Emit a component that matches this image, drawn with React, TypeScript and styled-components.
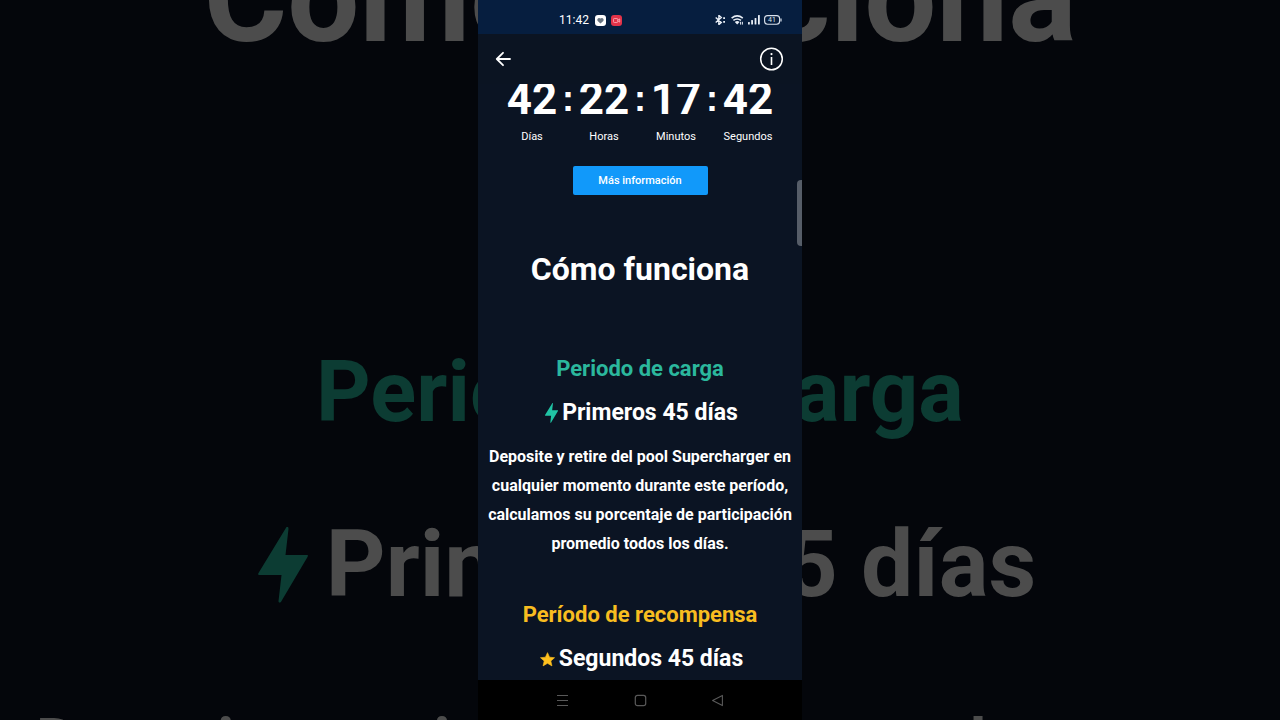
import React from "react";
import styled, { createGlobalStyle } from "styled-components";

const GlobalStyle = createGlobalStyle`
  *, *::before, *::after { box-sizing: border-box; }
  body {
    margin: 0;
    background: #04060b;
    font-family: Roboto, "Liberation Sans", sans-serif;
    color: #fff;
  }
  h1, h2, h3, p { margin: 0; }
  button { border: 0; padding: 0; background: none; color: inherit; font-family: inherit; cursor: pointer; }
  svg { display: block; }
`;

const Stage = styled.div`
  position: relative;
  display: flex;
  justify-content: center;
  height: 100vh;
  overflow: hidden;
`;

const Backdrop = styled.div`
  position: absolute;
  inset: 0;
  display: flex;
  flex-direction: column;
  align-items: center;
  overflow: hidden;
  white-space: nowrap;
  font-weight: 700;
  color: #4c4c4c;
`;

const BackdropTitle = styled.div`
  margin-top: -83px;
  font-size: 128px;
  line-height: 160px;
`;

const BackdropPeriod = styled.div`
  margin-top: 260px;
  font-size: 85px;
  line-height: 110px;
  color: #0c3c33;
`;

const BackdropDays = styled.div`
  display: flex;
  align-items: center;
  gap: 18px;
  margin-top: 63px;
  padding-left: 14px;
  font-size: 93px;
  line-height: 110px;
`;

const BackdropText = styled.div`
  margin-top: 66px;
  font-size: 64px;
  line-height: 114px;
`;

const Phone = styled.div`
  position: relative;
  display: flex;
  flex-direction: column;
  height: 100%;
  aspect-ratio: 9 / 20;
  background: #0b1423;
`;

const StatusBar = styled.header`
  display: flex;
  align-items: center;
  gap: 6px;
  flex: none;
  height: 34px;
  padding: 6px 20px 0 81px;
  background: #061e3f;
  font-size: 12px;
  line-height: 16px;
`;

const AppBadges = styled.div`
  display: flex;
  gap: 5px;
`;

const StatusIcons = styled.div`
  display: flex;
  align-items: center;
  gap: 4px;
  margin-left: auto;
`;

const AppBar = styled.nav`
  display: flex;
  align-items: center;
  justify-content: space-between;
  flex: none;
  height: 50px;
  padding: 0 18px 0 16px;
  background: #0b1422;
`;

const Content = styled.main`
  display: flex;
  flex-direction: column;
  align-items: center;
  flex: 1;
  min-height: 0;
  overflow: hidden;
  text-align: center;
`;

const Countdown = styled.div`
  display: flex;
  justify-content: center;
  margin-top: -7px;
`;

const Unit = styled.div`
  width: 60px;
`;

const Digits = styled.div`
  font-size: 44px;
  font-weight: 700;
  line-height: 44px;
`;

const UnitLabel = styled.div`
  margin-top: 8px;
  font-size: 11px;
  line-height: 16px;
`;

const Colon = styled.div`
  width: 12px;
  font: 700 36px/44px "Liberation Sans", sans-serif;
`;

const InfoButton = styled.button`
  flex: none;
  width: 135px;
  height: 29px;
  margin-top: 21px;
  border-radius: 2px;
  background: #1199fa;
  font-size: 11px;
  font-weight: 500;
  line-height: 16px;
`;

const Title = styled.h1`
  margin-top: 54px;
  font-size: 32px;
  font-weight: 700;
  line-height: 40px;
`;

const Period = styled.section<{ $gap: number }>`
  margin-top: ${(p) => p.$gap}px;
  flex: none;
`;

const PeriodTitle = styled.h2<{ $color: string }>`
  font-size: 22px;
  font-weight: 700;
  line-height: 28px;
  color: ${(p) => p.$color};
`;

const Days = styled.h3`
  display: flex;
  align-items: center;
  justify-content: center;
  gap: 4px;
  margin-top: 16px;
  padding-left: 3px;
  font-size: 23px;
  font-weight: 700;
  line-height: 28px;
`;

const Description = styled.p`
  margin-top: 15px;
  padding: 0 6px;
  font-size: 16px;
  font-weight: 700;
  line-height: 29px;
`;

const EdgeHandle = styled.div`
  position: absolute;
  top: 180px;
  right: 0;
  width: 5px;
  height: 66px;
  border-radius: 4px 0 0 4px;
  background: #565d68;
`;

const SystemNav = styled.footer`
  display: flex;
  align-items: center;
  justify-content: space-between;
  flex: none;
  height: 40px;
  padding: 0 78px;
  background: #000;
`;

const Bolt = ({ width, height, color }: { width: number; height: number; color: string }) => (
  <svg width={width} height={height} viewBox="0 0 49 76" fill={color} aria-hidden="true">
    <path d="M28 0 0 46c-1 2 0 2 1 2h22l-3 26c0 2 2 2 3 0l26-44c1-2 0-2-1-2H27l3-26c0-2-1-3-2-2Z" />
  </svg>
);

const Star = () => (
  <svg width="15" height="15" viewBox="0 0 24 24" fill="#ffc01e" stroke="#ffc01e" strokeWidth="1" strokeLinejoin="round" aria-hidden="true">
    <path d="m12 1 3.3 7.3 8 .8-6 5.3 1.8 7.8-7.1-4.1-7.1 4.1 1.8-7.8-6-5.3 8-.8Z" />
  </svg>
);

const HeartApp = () => (
  <svg width="11" height="11" viewBox="0 0 11 11" aria-hidden="true">
    <rect width="11" height="11" rx="3" fill="#fff" />
    <path d="M5.5 8.6 2.7 5.9C1.3 4.2 3.8 1.9 5.5 3.6 7.2 1.9 9.7 4.2 8.3 5.9Z" fill="#687480" />
  </svg>
);

const RecordApp = () => (
  <svg width="11" height="11" viewBox="0 0 11 11" fill="none" aria-hidden="true">
    <rect width="11" height="11" rx="3" fill="#e23349" />
    <rect x="2.5" y="3.5" width="4.2" height="4" rx=".8" stroke="#ffb3bb" strokeWidth=".8" />
    <path d="m6.8 5.2 1.9-1.3v3.2L6.8 5.8" stroke="#ffb3bb" strokeWidth=".8" />
  </svg>
);

const Bluetooth = () => (
  <svg width="12" height="10" viewBox="0 0 12 10" fill="none" stroke="#e8eef6" aria-hidden="true">
    <path d="m.7 2.4 5.6 5L3.9 9.6V.4l2.4 2.2-5.6 5" strokeWidth="1.4" />
    <path d="M8.2 3.2H10M8.2 6.8H10" strokeWidth="1.8" />
  </svg>
);

const Wifi = () => (
  <svg width="13" height="10" viewBox="0 0 13 10" fill="none" stroke="#e8eef6" strokeWidth="1.5" aria-hidden="true">
    <path d="M.6 3.2q5.6-4.6 11.2 0M2.4 5.4q3.8-3 7.6 0" />
    <path d="M3.8 7q2.4-1.8 4.8 0L6.2 9.6Z" fill="#e8eef6" stroke="none" />
    <path d="M9.6 6.8v2.8M11.4 6.8v2.8" strokeWidth="1" />
  </svg>
);

const Signal = () => (
  <svg width="12" height="10" viewBox="0 0 12 10" fill="#e8eef6" aria-hidden="true">
    <rect x="0" y="7" width="1.8" height="2.5" rx=".5" />
    <rect x="3.2" y="5" width="1.8" height="4.5" rx=".5" />
    <rect x="6.6" y="3" width="1.8" height="6.5" rx=".5" />
    <rect x="10" y="0" width="1.8" height="9.5" rx=".5" />
  </svg>
);

const Battery = () => (
  <svg width="18" height="10" viewBox="0 0 18 10" fill="none" aria-hidden="true">
    <rect x=".6" y=".6" width="15" height="8.6" rx="3" stroke="#dbe3ee" strokeWidth="1.1" />
    <path d="M17 3.5v3" stroke="#dbe3ee" strokeWidth="1.2" />
    <text x="8" y="7.4" fontSize="7" fill="#dbe3ee" textAnchor="middle">41</text>
  </svg>
);

const units = [
  { value: "42", label: "Días" },
  { value: "22", label: "Horas" },
  { value: "17", label: "Minutos" },
  { value: "42", label: "Segundos" },
];

export default function App() {
  return (
    <>
      <GlobalStyle />
      <Stage>
        <Backdrop aria-hidden="true">
          <BackdropTitle>Cómo funciona</BackdropTitle>
          <BackdropPeriod>Periodo de carga</BackdropPeriod>
          <BackdropDays>
            <Bolt width={50} height={76} color="#0c3c33" />
            Primeros 45 días
          </BackdropDays>
          <BackdropText>Deposite y retire del pool Supercharger en</BackdropText>
        </Backdrop>
        <Phone>
          <StatusBar>
            <span>11:42</span>
            <AppBadges>
              <HeartApp />
              <RecordApp />
            </AppBadges>
            <StatusIcons>
              <Bluetooth />
              <Wifi />
              <Signal />
              <Battery />
            </StatusIcons>
          </StatusBar>
          <AppBar>
            <button aria-label="Volver">
              <svg width="18" height="18" viewBox="0 0 18 18" fill="none" stroke="#fff" strokeWidth="1.8" strokeLinecap="round" strokeLinejoin="round">
                <path d="M16 9H3M9 2.8 2.8 9 9 15.2" />
              </svg>
            </button>
            <button aria-label="Información">
              <svg width="25" height="25" viewBox="0 0 25 25" fill="none" stroke="#fff">
                <circle cx="12.5" cy="12" r="10.8" strokeWidth="1.5" />
                <path d="M12.5 10v8" strokeWidth="1.6" />
                <circle cx="12.5" cy="7.1" r="1.1" fill="#fff" stroke="none" />
              </svg>
            </button>
          </AppBar>
          <Content>
            <Countdown>
              {units.map((unit, i) => (
                <React.Fragment key={unit.label}>
                  {i > 0 && <Colon>:</Colon>}
                  <Unit>
                    <Digits>{unit.value}</Digits>
                    <UnitLabel>{unit.label}</UnitLabel>
                  </Unit>
                </React.Fragment>
              ))}
            </Countdown>
            <InfoButton>Más información</InfoButton>
            <Title>Cómo funciona</Title>
            <Period $gap={66}>
              <PeriodTitle $color="#2bb89d">Periodo de carga</PeriodTitle>
              <Days>
                <Bolt width={13} height={20} color="#20c3a4" />
                Primeros 45 días
              </Days>
              <Description>
                Deposite y retire del pool Supercharger en cualquier momento durante este período, calculamos su
                porcentaje de participación promedio todos los días.
              </Description>
            </Period>
            <Period $gap={43}>
              <PeriodTitle $color="#f8bd20">Período de recompensa</PeriodTitle>
              <Days>
                <Star />
                Segundos 45 días
              </Days>
            </Period>
          </Content>
          <EdgeHandle />
          <SystemNav>
            <button aria-label="Recientes">
              <svg width="13" height="13" viewBox="0 0 13 13" stroke="#595959" strokeWidth="1.1">
                <path d="M1 1.5h11M1 6.5h11M1 11.5h11" />
              </svg>
            </button>
            <button aria-label="Inicio">
              <svg width="13" height="13" viewBox="0 0 13 13" fill="none" stroke="#595959" strokeWidth="1.2">
                <rect x="1.3" y="1.3" width="10.4" height="10.4" rx="2.2" />
              </svg>
            </button>
            <button aria-label="Atrás">
              <svg width="13" height="13" viewBox="0 0 13 13" fill="none" stroke="#595959" strokeWidth="1.1" strokeLinejoin="round">
                <path d="M11.4 1.4v10.2L1.6 6.5Z" />
              </svg>
            </button>
          </SystemNav>
        </Phone>
      </Stage>
    </>
  );
}
